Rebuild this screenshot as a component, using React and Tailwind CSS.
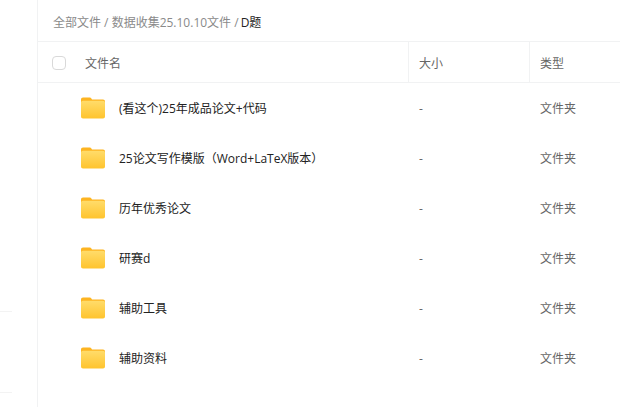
const rows = ["(看这个)25年成品论文+代码", "25论文写作模版（Word+LaTeX版本）", "历年优秀论文", "研赛d", "辅助工具", "辅助资料"];

function Folder() {
  return (
    <svg width="24" height="22" viewBox="0 0 24 22" className="block">
      <defs>
        <linearGradient id="fg" x1="0" y1="0" x2="0" y2="1">
          <stop offset="0" stopColor="#ffdc6a" />
          <stop offset="1" stopColor="#ffc42e" />
        </linearGradient>
      </defs>
      <path d="M2 0.5H8.5C9.6 0.5 10.2 1 11 2.4H22C23.2 2.4 24 3.2 24 4.4V8H0V2.5C0 1.2 0.8 0.5 2 0.5Z" fill="#fdb421" />
      <path d="M2 3.8H22C23.2 3.8 24 4.6 24 5.8V19.5C24 20.8 23.2 21.5 22 21.5H2C0.8 21.5 0 20.8 0 19.5V5.8C0 4.6 0.8 3.8 2 3.8Z" fill="url(#fg)" />
    </svg>
  );
}

export default function App() {
  return (
    <div className="flex h-[407px] w-[620px] overflow-hidden bg-white text-[12px] leading-[18px] font-['Open_Sans','Noto_Sans_CJK_SC',sans-serif]">
      <aside className="flex w-[38px] shrink-0 flex-col border-r border-[#f1f2f3] pt-[311px]">
        <div className="h-px w-3 bg-[#f3f3f3]" />
        <div className="mt-20 h-px w-3 bg-[#f3f3f3]" />
      </aside>
      <main className="min-w-0 flex-1">
        <div className="flex h-[42px] items-center border-b border-[#f1f2f3] pl-[15px] pt-[4px] text-[#8a8a8a]">
          <span>全部文件 / 数据收集25.10.10文件 / </span>
          <span className="ml-[2px] text-[#222]">D题</span>
        </div>
        <div className="flex h-[41px] items-center border-b border-[#f1f2f3] text-[#666]">
          <div className="flex h-full w-[370px] items-center pl-[14px]">
            <span className="mt-[2px] h-[14px] w-[14px] rounded-[4px] border border-[#d9d9d9]" />
            <span className="ml-[19px] pt-[4px]">文件名</span>
          </div>
          <div className="flex h-full w-[121px] items-center border-l border-[#f1f2f3] pl-[10px] pt-[4px]">大小</div>
          <div className="flex h-full flex-1 items-center border-l border-[#f1f2f3] pl-[10px] pt-[4px]">类型</div>
        </div>
        {rows.map((name) => (
          <div key={name} className="flex h-[50px] items-center">
            <div className="flex w-[370px] items-center pl-[43px]">
              <Folder />
              <span className="ml-[14px] pt-[2px] text-[#222]">{name}</span>
            </div>
            <div className="w-[121px] pl-[11px] pt-[2px] text-[#666]">-</div>
            <div className="flex-1 pl-[11px] pt-[2px] text-[#666]">文件夹</div>
          </div>
        ))}
      </main>
    </div>
  );
}
